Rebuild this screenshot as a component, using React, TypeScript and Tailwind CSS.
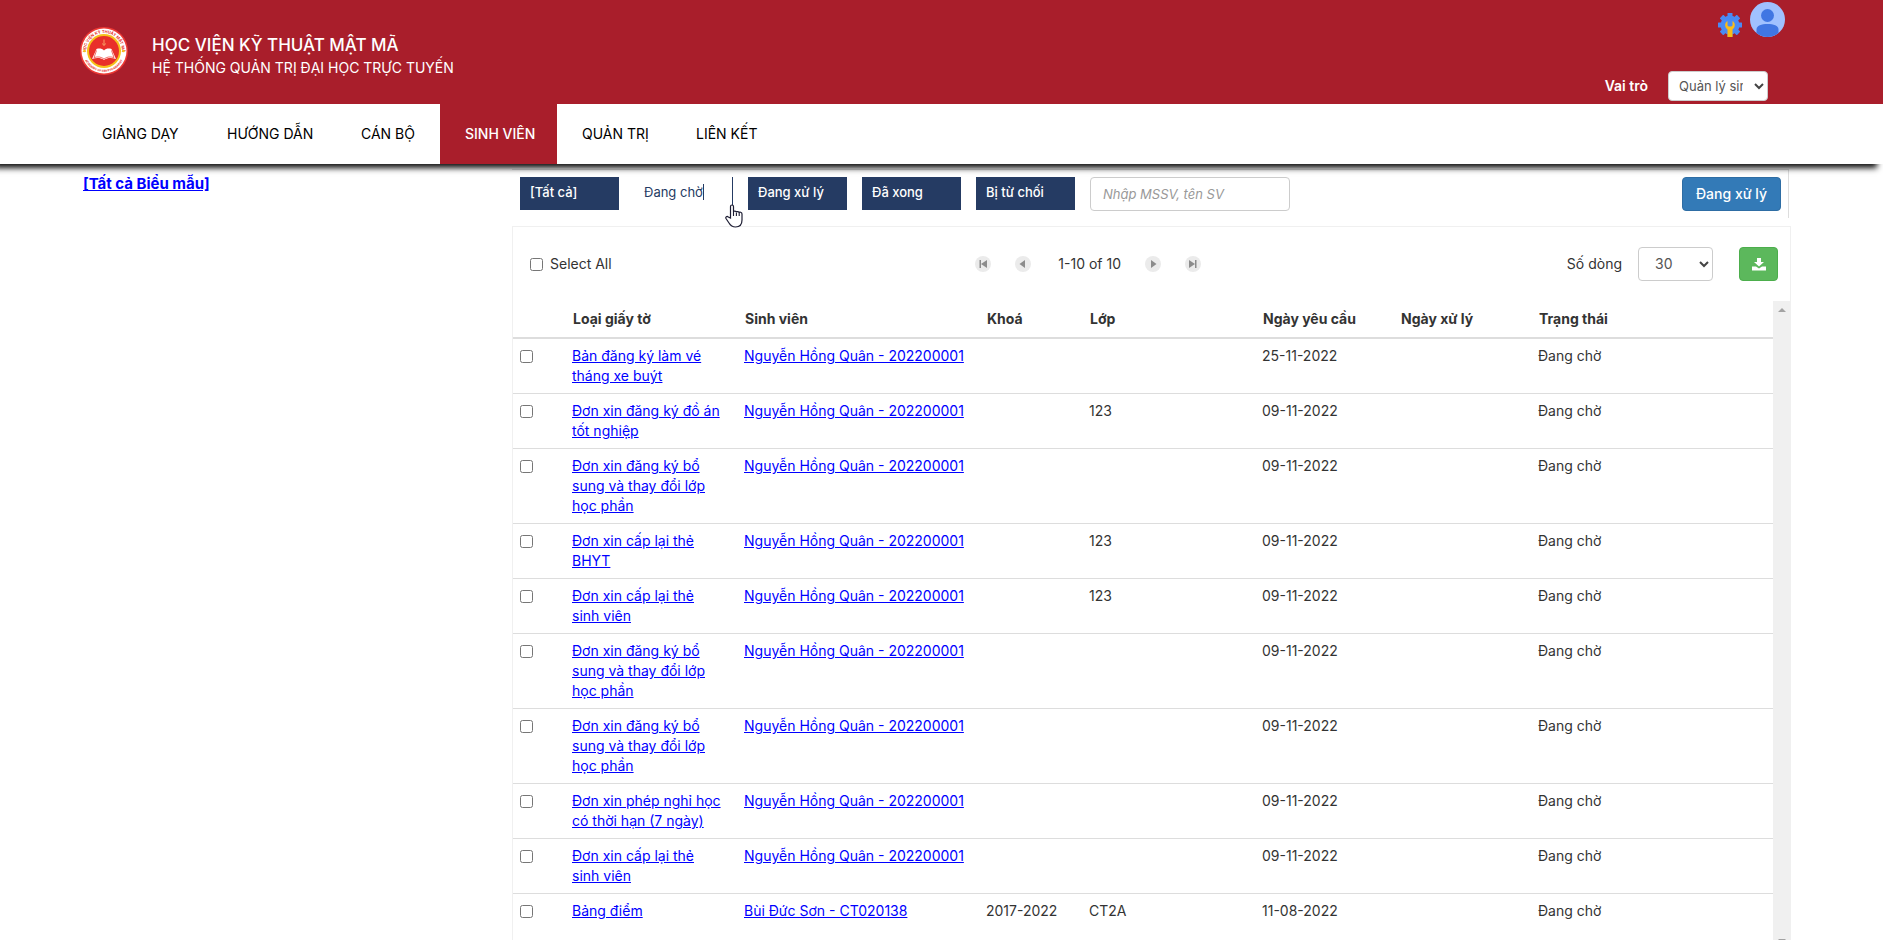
import { useState } from "react";

type Row = {
  doc: string;
  student: string;
  course?: string;
  group?: string;
  requested: string;
};

const NAV = [
  { label: "GIẢNG DẠY", width: "w-[125px]" },
  { label: "HƯỚNG DẪN", width: "w-[134px]" },
  { label: "CÁN BỘ", width: "w-[104px]" },
  { label: "SINH VIÊN", width: "w-[117px]" },
  { label: "QUẢN TRỊ", width: "w-[114px]" },
  { label: "LIÊN KẾT", width: "w-[105px]" },
];

const FILTERS = ["[Tất cả]", "Đang chờ", "Đang xử lý", "Đã xong", "Bị từ chối"];

const quan = "Nguyễn Hồng Quân - 202200001";

// "sinh viên" is kept on one line
const ROWS: Row[] = [
  { doc: "Bản đăng ký làm vé tháng xe buýt", student: quan, requested: "25-11-2022" },
  { doc: "Đơn xin đăng ký đồ án tốt nghiệp", student: quan, group: "123", requested: "09-11-2022" },
  { doc: "Đơn xin đăng ký bổ sung và thay đổi lớp học phần", student: quan, requested: "09-11-2022" },
  { doc: "Đơn xin cấp lại thẻ BHYT", student: quan, group: "123", requested: "09-11-2022" },
  { doc: "Đơn xin cấp lại thẻ sinh\u00a0viên", student: quan, group: "123", requested: "09-11-2022" },
  { doc: "Đơn xin đăng ký bổ sung và thay đổi lớp học phần", student: quan, requested: "09-11-2022" },
  { doc: "Đơn xin đăng ký bổ sung và thay đổi lớp học phần", student: quan, requested: "09-11-2022" },
  { doc: "Đơn xin phép nghỉ học có thời hạn (7 ngày)", student: quan, requested: "09-11-2022" },
  { doc: "Đơn xin cấp lại thẻ sinh\u00a0viên", student: quan, requested: "09-11-2022" },
  { doc: "Bảng điểm", student: "Bùi Đức Sơn - CT020138", course: "2017-2022", group: "CT2A", requested: "11-08-2022" },
];

function Logo() {
  return (
    <svg className="size-12" viewBox="0 0 48 48" aria-hidden="true">
      <circle cx="24" cy="24" r="24" fill="#ee3a35" />
      <circle cx="24" cy="24" r="22.500" fill="#fff" />
      <path id="ring-top" d="M6 24a18 18 0 0 1 36 0" fill="none" />
      <path id="ring-bottom" d="M3 24a21 21 0 0 0 42 0" fill="none" />
      <text fontSize="4" fontWeight="700" fill="#e6332a" textAnchor="middle">
        <textPath href="#ring-top" startOffset="50%">HỌC VIỆN KỸ THUẬT MẬT MÃ</textPath>
      </text>
      <text fontSize="3" fontWeight="700" fill="#e6332a" textAnchor="middle">
        <textPath href="#ring-bottom" startOffset="50%">ACADEMY OF CRYPTOGRAPHY</textPath>
      </text>
      <circle cx="24" cy="24" r="17" fill="#f6c21c" />
      <circle cx="24" cy="24" r="15" fill="#e9302a" />
      <path d="M24 12.500v6M22.500 16.500c0 2 3 2 3 0" stroke="#f7a267" strokeWidth="1" fill="none" />
      <path d="M16.500 22L12 32c4.500-1.500 8.500-1.500 12 1 3.500-2.500 7.500-2.500 12-1l-4.500-10c-3-1-5.500-.5-7.500 1.500-2-2-4.500-2.500-7.500-1.500z" fill="#fff" />
      <path d="M16.500 23.500L14 30.500c4-1 7-.8 10 1.500 3-2.300 6-2.500 10-1.500l-2.500-7" stroke="#e9302a" strokeWidth=".7" fill="none" />
      <circle cx="4.500" cy="24" r="1.300" fill="#f6c21c" />
      <circle cx="43.500" cy="24" r="1.300" fill="#f6c21c" />
    </svg>
  );
}

function GearIcon() {
  return (
    <svg className="size-6" viewBox="0 0 24 24" aria-hidden="true">
      <g fill="#4a8af4">
        <circle cx="12" cy="12" r="9.500" />
        <rect x="9.500" y="0" width="5" height="24" rx=".5" />
        <rect x="9.500" y="0" width="5" height="24" rx=".5" transform="rotate(45 12 12)" />
        <rect x="9.500" y="0" width="5" height="24" rx=".5" transform="rotate(90 12 12)" />
        <rect x="9.500" y="0" width="5" height="24" rx=".5" transform="rotate(135 12 12)" />
      </g>
      <path d="M9.500 8C6.500 9.500 6.300 14.500 9.500 16.500V24h5v-7.500c3.200-2 3-7 0-8.500v4.500l-1.200 1h-2.600l-1.200-1z" fill="#fbbc17" />
    </svg>
  );
}

function AvatarIcon() {
  return (
    <svg className="size-[35px]" viewBox="0 0 35 35" aria-hidden="true">
      <circle cx="17.500" cy="17.500" r="17.500" fill="#a0c1ff" />
      <circle cx="17.500" cy="13.500" r="6.500" fill="#4076e3" />
      <path d="M6.500 31v-3.500c0-4 5-5.500 11-5.500s11 1.500 11 5.500V31a17.500 17.500 0 0 1-22 0z" fill="#4076e3" />
    </svg>
  );
}

function PagerButton({ label, flip, bar }: { label: string; flip?: boolean; bar?: boolean }) {
  return (
    <button type="button" aria-label={label} className="size-4 rounded-full bg-[#ebebeb]">
      <svg viewBox="0 0 16 16" className={flip ? "size-4 rotate-180" : "size-4"}>
        <path d={bar ? "M12 4v8L6 8z" : "M10 4v8L4.500 8z"} fill="#8c8c8c" />
        {bar && <path d="M4.500 4h1.500v8H4.500z" fill="#8c8c8c" />}
      </svg>
    </button>
  );
}

function Chevron() {
  return (
    <svg viewBox="0 0 10 7" className="pointer-events-none h-[7px] w-[10px]" aria-hidden="true">
      <path d="M1 1l4 4 4-4" fill="none" stroke="#444" strokeWidth="2" />
    </svg>
  );
}

function HandCursor() {
  return (
    <svg viewBox="0 0 18 24" className="pointer-events-none absolute top-[27px] -right-[11px] h-6 w-[18px]" aria-hidden="true">
      <path
        d="M5.500 14V2.500a1.500 1.500 0 0 1 3 0V8c0-1.300 2.900-1.300 2.900.3 0-1.200 2.800-1 2.800.6 0-1.200 2.800-.8 2.800 1V16c0 4.500-2.500 7-6.500 7-3.500 0-5-1.500-6.500-4L1 14.500c-.8-1.500 1-2.800 2.300-1.500z"
        fill="#fff"
        stroke="#1d1d33"
        strokeWidth="1.200"
      />
      <path d="M8.500 8v4M11.400 8.500V12M14.200 9v3" stroke="#1d1d33" strokeWidth="1.100" />
    </svg>
  );
}

export default function App() {
  const [filter, setFilter] = useState("Đang chờ");
  const [selected, setSelected] = useState<number[]>([]);

  const toggle = (i: number) => {
    setSelected(selected.includes(i) ? selected.filter((n) => n !== i) : [...selected, i]);
  };

  return (
    <div className="flex h-screen flex-col overflow-hidden bg-white font-[Inter,'Noto_Sans',sans-serif] text-sm leading-5 text-[#333]">
      <header className="flex h-[104px] shrink-0 justify-between bg-[#a91e2b] pl-20 text-white">
        <div className="flex items-start pt-[27px]">
          <Logo />
          <div className="pt-1.5 pl-6">
            <h1 className="text-[17px] leading-6 font-medium">HỌC VIỆN KỸ THUẬT MẬT MÃ</h1>
            <p className="text-sm leading-[22px]">HỆ THỐNG QUẢN TRỊ ĐẠI HỌC TRỰC TUYẾN</p>
          </div>
        </div>
        <div className="flex flex-col items-end justify-between pt-0.5 pb-[3px]">
          <div className="flex items-start gap-2 pr-[98px]">
            <button type="button" aria-label="Cài đặt" className="pt-[11px]">
              <GearIcon />
            </button>
            <button type="button" aria-label="Tài khoản">
              <AvatarIcon />
            </button>
          </div>
          <div className="flex items-center gap-5 pr-[115px]">
            <label htmlFor="role" className="font-semibold">
              Vai trò
            </label>
            <div className="grid items-center">
              <select
                id="role"
                className="col-start-1 row-start-1 h-[30px] w-[100px] appearance-none rounded-sm border border-[#ccc] bg-white pr-6 pl-2.5 text-[13px] text-[#555]"
              >
                <option>Quản lý sinh viên</option>
              </select>
              <span className="pointer-events-none col-start-1 row-start-1 mr-1 justify-self-end">
                <Chevron />
              </span>
            </div>
          </div>
        </div>
      </header>

      <nav className="relative z-10 -ml-3 flex h-[60px] shrink-0 bg-white pl-[89px] shadow-[0_10px_6px_-6px_#111]">
        {NAV.map((item) => (
          <a
            key={item.label}
            href="#"
            className={`${item.width} pl-[25px] leading-[60px] whitespace-nowrap ${
              item.label === "SINH VIÊN" ? "bg-[#a91e2b] font-medium text-white" : "text-black"
            }`}
          >
            {item.label}
          </a>
        ))}
      </nav>

      <main className="flex min-h-0 flex-1 pr-[92px] pl-[83px]">
        <aside className="w-[429px] shrink-0 pt-2.5">
          <a href="#" className="text-[15px] font-bold text-[#0000ff] underline">
            [Tất cả Biểu mẫu]
          </a>
        </aside>

        <section className="flex min-w-0 flex-1 flex-col pt-[5px]">
          <div className="mr-0.5 flex h-[49px] shrink-0 items-start border-t border-r border-[#ddd] pt-[7px] pr-[7px] pl-2">
            <div className="flex gap-[15px]">
              {FILTERS.map((name) => (
                <button
                  key={name}
                  type="button"
                  onClick={() => setFilter(name)}
                  className={`relative h-[33px] w-[99px] px-2.5 pb-1 text-left text-[13px] ${
                    name === filter
                      ? "border-r border-[#253b63] text-[#253b63]"
                      : "bg-[#253b63] font-medium text-white"
                  }`}
                >
                  {name === filter ? <span className="border-r border-[#253b63]">{name}</span> : name}
                  {name === filter && <HandCursor />}
                </button>
              ))}
              <input
                type="text"
                aria-label="Tìm sinh viên"
                placeholder="Nhập MSSV, tên SV"
                className="h-[34px] w-[200px] rounded-sm border border-[#ccc] px-3 text-[13px] placeholder:text-[#999] placeholder:italic"
              />
            </div>
            <button
              type="button"
              className="ml-auto h-[34px] w-[99px] rounded-sm border border-[#2e6da4] bg-[#337ab7] text-sm font-medium text-white"
            >
              Đang xử lý
            </button>
          </div>

          <div className="mt-2 flex min-h-0 flex-1 flex-col border-t border-l border-[#f0f0f0]">
            <div className="flex h-[74px] shrink-0 items-center border-r border-[#f0f0f0] pr-3 pl-[17px]">
              <label className="flex w-[445px] items-center gap-[7px]">
                <input
                  type="checkbox"
                  className="size-[13px]"
                  checked={selected.length === ROWS.length}
                  onChange={(e) => setSelected(e.target.checked ? ROWS.map((_, i) => i) : [])}
                />
                Select All
              </label>
              <div className="flex items-center gap-6">
                <PagerButton label="Trang đầu" bar />
                <PagerButton label="Trang trước" />
                <span className="w-[66px] text-right whitespace-nowrap">1-10 of 10</span>
                <PagerButton label="Trang sau" flip />
                <PagerButton label="Trang cuối" flip bar />
              </div>
              <div className="flex flex-1 items-center justify-end">
                <label htmlFor="rows" className="pr-4">
                  Số dòng
                </label>
                <div className="grid items-center">
                  <select
                    id="rows"
                    className="col-start-1 row-start-1 h-[34px] w-[75px] appearance-none rounded-sm border border-[#ccc] bg-white pl-4 text-[#555]"
                  >
                    <option>30</option>
                  </select>
                  <span className="pointer-events-none col-start-1 row-start-1 mr-1 justify-self-end">
                    <Chevron />
                  </span>
                </div>
                <button
                  type="button"
                  aria-label="Tải xuống"
                  className="ml-[26px] flex h-[34px] w-[39px] items-center justify-center rounded-sm border border-[#4cae4c] bg-[#5cb85c]"
                >
                  <svg viewBox="0 0 14 13" className="h-[13px] w-[14px]" aria-hidden="true">
                    <path d="M5 0h4v4h3L7 8.500 2 4h3zM0 8.500h4l3 2 3-2h4v4H0z" fill="#fff" />
                  </svg>
                </button>
              </div>
            </div>

            <div className="flex min-h-0 flex-1">
              <div className="min-w-0 flex-1 overflow-hidden">
                <table className="w-full table-fixed text-left">
                  <colgroup>
                    <col className="w-[52px]" />
                    <col className="w-[172px]" />
                    <col className="w-[242px]" />
                    <col className="w-[103px]" />
                    <col className="w-[173px]" />
                    <col className="w-[138px]" />
                    <col className="w-[138px]" />
                    <col />
                  </colgroup>
                  <thead>
                    <tr className="h-[37px] border-b-2 border-[#ddd]">
                      <th />
                      <th className="px-2 font-bold">Loại giấy tờ</th>
                      <th className="px-2 font-bold">Sinh viên</th>
                      <th className="px-2 font-bold">Khoá</th>
                      <th className="px-2 font-bold">Lớp</th>
                      <th className="px-2 font-bold">Ngày yêu cầu</th>
                      <th className="px-2 font-bold">Ngày xử lý</th>
                      <th className="px-2 font-bold">Trạng thái</th>
                    </tr>
                  </thead>
                  <tbody>
                    {ROWS.map((row, i) => (
                      <tr key={i} className="h-[55px] border-b border-[#ddd] align-top">
                        <td className="px-[7px] pt-[11px]">
                          <input
                            type="checkbox"
                            aria-label={row.doc}
                            className="block size-[13px]"
                            checked={selected.includes(i)}
                            onChange={() => toggle(i)}
                          />
                        </td>
                        <td className="p-[7px]">
                          <a href="#" className="text-[#0000ff] underline">
                            {row.doc}
                          </a>
                        </td>
                        <td className="p-[7px] whitespace-nowrap">
                          <a href="#" className="text-[#0000ff] underline">
                            {row.student}
                          </a>
                        </td>
                        <td className="p-[7px]">{row.course}</td>
                        <td className="p-[7px]">{row.group}</td>
                        <td className="p-[7px]">{row.requested}</td>
                        <td className="p-[7px]" />
                        <td className="p-[7px]">Đang chờ</td>
                      </tr>
                    ))}
                  </tbody>
                </table>
              </div>
              <div className="-mb-2 flex w-[18px] shrink-0 flex-col items-center justify-between bg-[#f0f0f0] pt-[7px]">
                <svg viewBox="0 0 8 4" className="h-1 w-2" aria-hidden="true">
                  <path d="M0 4l4-4 4 4z" fill="#a3a3a3" />
                </svg>
                <svg viewBox="0 0 8 9" className="h-[9px] w-2" aria-hidden="true">
                  <path d="M0 0h8L4 4z" fill="#a3a3a3" />
                </svg>
              </div>
            </div>
          </div>
        </section>
      </main>
    </div>
  );
}
